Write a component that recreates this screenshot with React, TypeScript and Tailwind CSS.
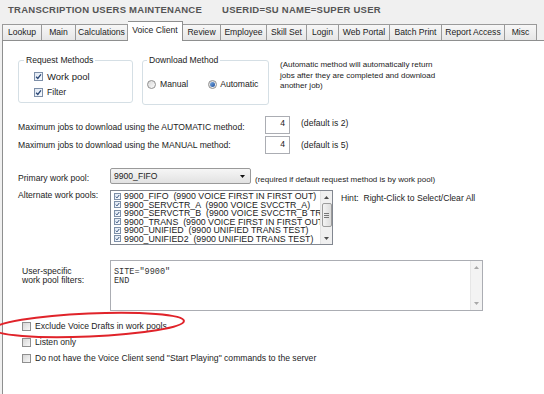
import React from 'react';

const TABS = [
  { label: 'Lookup', w: 'w-[40px]' },
  { label: 'Main', w: 'w-[34px]' },
  { label: 'Calculations', w: 'w-[52px]' },
  { label: 'Voice Client', w: 'w-[55px]', active: true },
  { label: 'Review', w: 'w-[38px]' },
  { label: 'Employee', w: 'w-[46px]' },
  { label: 'Skill Set', w: 'w-[40px]' },
  { label: 'Login', w: 'w-[32px]' },
  { label: 'Web Portal', w: 'w-[51px]' },
  { label: 'Batch Print', w: 'w-[52px]' },
  { label: 'Report Access', w: 'w-[63px]' },
  { label: 'Misc', w: 'w-[32px]' },
];

const POOLS = [
  '9900_FIFO  (9900 VOICE FIRST IN FIRST OUT)',
  '9900_SERVCTR_A  (9900 VOICE SVCCTR_A)',
  '9900_SERVCTR_B  (9900 VOICE SVCCTR_B TRANS)',
  '9900_TRANS  (9900 VOICE FIRST IN FIRST OUT)',
  '9900_UNIFIED  (9900 UNIFIED TRANS TEST)',
  '9900_UNIFIED2  (9900 UNIFIED TRANS TEST)',
];

function Check({ checked, small }: { checked?: boolean; small?: boolean }) {
  const size = small ? 'w-[7px] h-[7px]' : 'w-[9px] h-[9px]';
  if (!checked) {
    return (
      <span className={`${size} shrink-0 border border-[#8f8f8f] bg-gradient-to-br from-[#d6d6d6] to-[#f8f8f8]`} />
    );
  }
  return (
    <span className={`${size} shrink-0 border border-[#7d8fa8] bg-gradient-to-br from-[#dfe7f2] to-[#f8fbff] flex items-center justify-center`}>
      <svg viewBox="0 0 8 8" className="w-full h-full">
        <path d="M1.3 4.2 L3.2 6.2 L6.8 1.6" fill="none" stroke="#2a4775" strokeWidth="1.5" />
      </svg>
    </span>
  );
}

function Radio({ selected }: { selected?: boolean }) {
  return (
    <span className="w-[9px] h-[9px] shrink-0 rounded-full border border-[#8f8f8f] bg-gradient-to-br from-[#d8d8d8] to-[#fbfbfb] flex items-center justify-center">
      {selected && <span className="w-[5px] h-[5px] rounded-full bg-gradient-to-br from-[#7fb0e8] to-[#1f4f9a]" />}
    </span>
  );
}

function Arrow({ up, color = '#4d4d4d' }: { up?: boolean; color?: string }) {
  return (
    <svg width="5" height="3" viewBox="0 0 5 3">
      <path d={up ? 'M0 3 L2.5 0 L5 3 Z' : 'M0 0 L5 0 L2.5 3 Z'} fill={color} />
    </svg>
  );
}

function ListScroll() {
  return (
    <div className="w-[12px] shrink-0 bg-[#f0f0f0] border-l border-[#e2e2e2] flex flex-col items-center">
      <div className="h-[12px] flex items-center justify-center"><Arrow up /></div>
      <div className="w-[10px] h-[24px] border border-[#9c9c9c] rounded-[2px] bg-gradient-to-r from-[#f3f3f3] to-[#dcdcdc] flex flex-col items-center justify-center gap-[1px]">
        <span className="w-[5px] h-px bg-[#777]" />
        <span className="w-[5px] h-px bg-[#777]" />
        <span className="w-[5px] h-px bg-[#777]" />
      </div>
      <div className="flex-1" />
      <div className="h-[11px] flex items-center justify-center"><Arrow /></div>
    </div>
  );
}

function AreaScroll() {
  return (
    <div className="w-[12px] shrink-0 bg-[#f3f3f3] border-l border-[#e6e6e6] flex flex-col items-center justify-between">
      <div className="h-[13px] flex items-center justify-center"><Arrow up color="#a8a8a8" /></div>
      <div className="h-[13px] flex items-center justify-center"><Arrow color="#a8a8a8" /></div>
    </div>
  );
}

export default function App() {
  return (
    <div className="relative w-[544px] h-[394px] overflow-hidden bg-[#f0f0f0] flex flex-col font-['Liberation_Sans',Arial,sans-serif] text-[8.6px] leading-[11px] text-[#1c1c1c]">
      {/* window title */}
      <div className="h-[18px] flex items-center pl-[8px] font-bold text-[9.5px] tracking-[0.25px] text-[#555] whitespace-pre">
        <span>TRANSCRIPTION USERS MAINTENANCE</span>
        <span className="ml-[20px]">USERID=SU NAME=SUPER USER</span>
      </div>

      {/* tab strip */}
      <div className="h-[22px] flex items-end pl-[2px]">
        {TABS.map((t, i) =>
          t.active ? (
            <div
              key={t.label}
              className={`${t.w} h-[20px] -mb-px relative z-10 bg-white border-t border-r border-[#8e8f8f] flex items-center justify-center pb-[3px]`}
            >
              {t.label}
            </div>
          ) : (
            <div
              key={t.label}
              className={`${t.w} h-[16px] bg-gradient-to-b from-[#f7f7f7] to-[#e6e6e6] border-t border-r border-[#9a9a9a] ${i === 0 ? 'border-l' : ''} flex items-center justify-center`}
            >
              {t.label}
            </div>
          ),
        )}
      </div>

      {/* tab page */}
      <div className="flex-1 ml-[2px] bg-white border-t border-l border-[#8e8f8f] pl-[15px] flex flex-col">
        <div className="mt-[19px] flex items-start">
          <div className="relative w-[115px] h-[43px] border border-[#d5dfe5] rounded-[3px]">
            <span className="absolute left-[5px] -top-[6px] bg-white px-[2px]">Request Methods</span>
            <div className="pt-[10px] pl-[15px] flex flex-col gap-[5px]">
              <div className="h-[11px] flex items-center gap-[4px]">
                <Check checked />
                <span className="text-[9.5px]">Work pool</span>
              </div>
              <div className="h-[11px] flex items-center gap-[4px]">
                <Check checked />
                <span>Filter</span>
              </div>
            </div>
          </div>

          <div className="relative ml-[9px] w-[127px] h-[45px] border border-[#d5dfe5] rounded-[3px]">
            <span className="absolute left-[4px] -top-[6px] bg-white px-[2px]">Download Method</span>
            <div className="pt-[18px] pl-[4px] flex items-center h-[11px] box-content">
              <Radio />
              <span className="ml-[4px]">Manual</span>
              <span className="ml-[20px]"><Radio selected /></span>
              <span className="ml-[3px]">Automatic</span>
            </div>
          </div>

          <div className="ml-[11px] text-[8px] leading-[10.5px]">
            (Automatic method will automatically return
            <br />
            jobs after they are completed and download
            <br />
            another job)
          </div>
        </div>

        <div className="mt-[11px] flex items-start">
          <div className="w-[247px] pt-[6px]">Maximum jobs to download using the AUTOMATIC method:</div>
          <div className="w-[25px] h-[18px] border border-[#abadb3] flex justify-end pr-[4px] pt-[1px]">4</div>
          <div className="ml-[11px] pt-[2px]">(default is 2)</div>
        </div>

        <div className="mt-[2px] flex items-start">
          <div className="w-[247px] pt-[4px]">Maximum jobs to download using the MANUAL method:</div>
          <div className="w-[25px] h-[18px] border border-[#abadb3] flex justify-end pr-[4px] pt-[2px]">4</div>
          <div className="ml-[11px] pt-[4px]">(default is 5)</div>
        </div>

        <div className="mt-[14px] flex items-start">
          <div className="w-[92px] pt-[5px]">Primary work pool:</div>
          <div className="w-[141px] h-[16px] border border-[#9a9a9a] rounded-[2px] bg-gradient-to-b from-[#f6f6f6] to-[#e2e2e2] flex items-center justify-between pl-[3px] pr-[5px]">
            <span>9900_FIFO</span>
            <Arrow color="#111" />
          </div>
          <div className="ml-[4px] pt-[6px] text-[8px]">(required if default request method is by work pool)</div>
        </div>

        <div className="mt-[5px] flex items-start">
          <div className="w-[92px]">Alternate work pools:</div>
          <div className="w-[223px] h-[55px] border border-[#828790] bg-white flex">
            <div className="flex-1 overflow-hidden pl-[3px] pt-[1px] text-[8.8px] text-[#222]">
              {POOLS.map((p) => (
                <div key={p} className="h-[8.5px] flex items-center gap-[3px] whitespace-pre">
                  <Check checked small />
                  <span className="leading-[8.5px]">{p}</span>
                </div>
              ))}
            </div>
            <ListScroll />
          </div>
          <div className="ml-[8px] pt-[3px] whitespace-pre">Hint:  Right-Click to Select/Clear All</div>
        </div>

        <div className="mt-[15px] flex items-start">
          <div className="w-[92px] pl-[4px] pt-[7px] leading-[9px]">
            User-specific
            <br />
            work pool filters:
          </div>
          <div className="w-[373px] h-[51px] border border-[#abadb3] flex">
            <div className="flex-1 pl-[3px] pt-[7px] font-['Liberation_Mono',monospace] text-[8.5px] leading-[9.3px] text-[#333] whitespace-pre">
              {'SITE="9900"\nEND'}
            </div>
            <AreaScroll />
          </div>
        </div>

        <div className="mt-[10px] pl-[4px] flex flex-col gap-[5px]">
          <div className="h-[11px] flex items-center gap-[4px]">
            <Check />
            <span>Exclude Voice Drafts in work pools</span>
          </div>
          <div className="h-[11px] flex items-center gap-[4px]">
            <Check />
            <span>Listen only</span>
          </div>
          <div className="h-[11px] flex items-center gap-[4px]">
            <Check />
            <span>Do not have the Voice Client send "Start Playing" commands to the server</span>
          </div>
        </div>
      </div>

      {/* hand-drawn annotation */}
      <svg className="absolute left-0 top-[300px] pointer-events-none" width="200" height="50" viewBox="0 0 200 50">
        <ellipse cx="89" cy="25" rx="95" ry="11.5" transform="rotate(-2.5 89 25)" fill="none" stroke="#e0232a" strokeWidth="2" />
      </svg>
    </div>
  );
}
